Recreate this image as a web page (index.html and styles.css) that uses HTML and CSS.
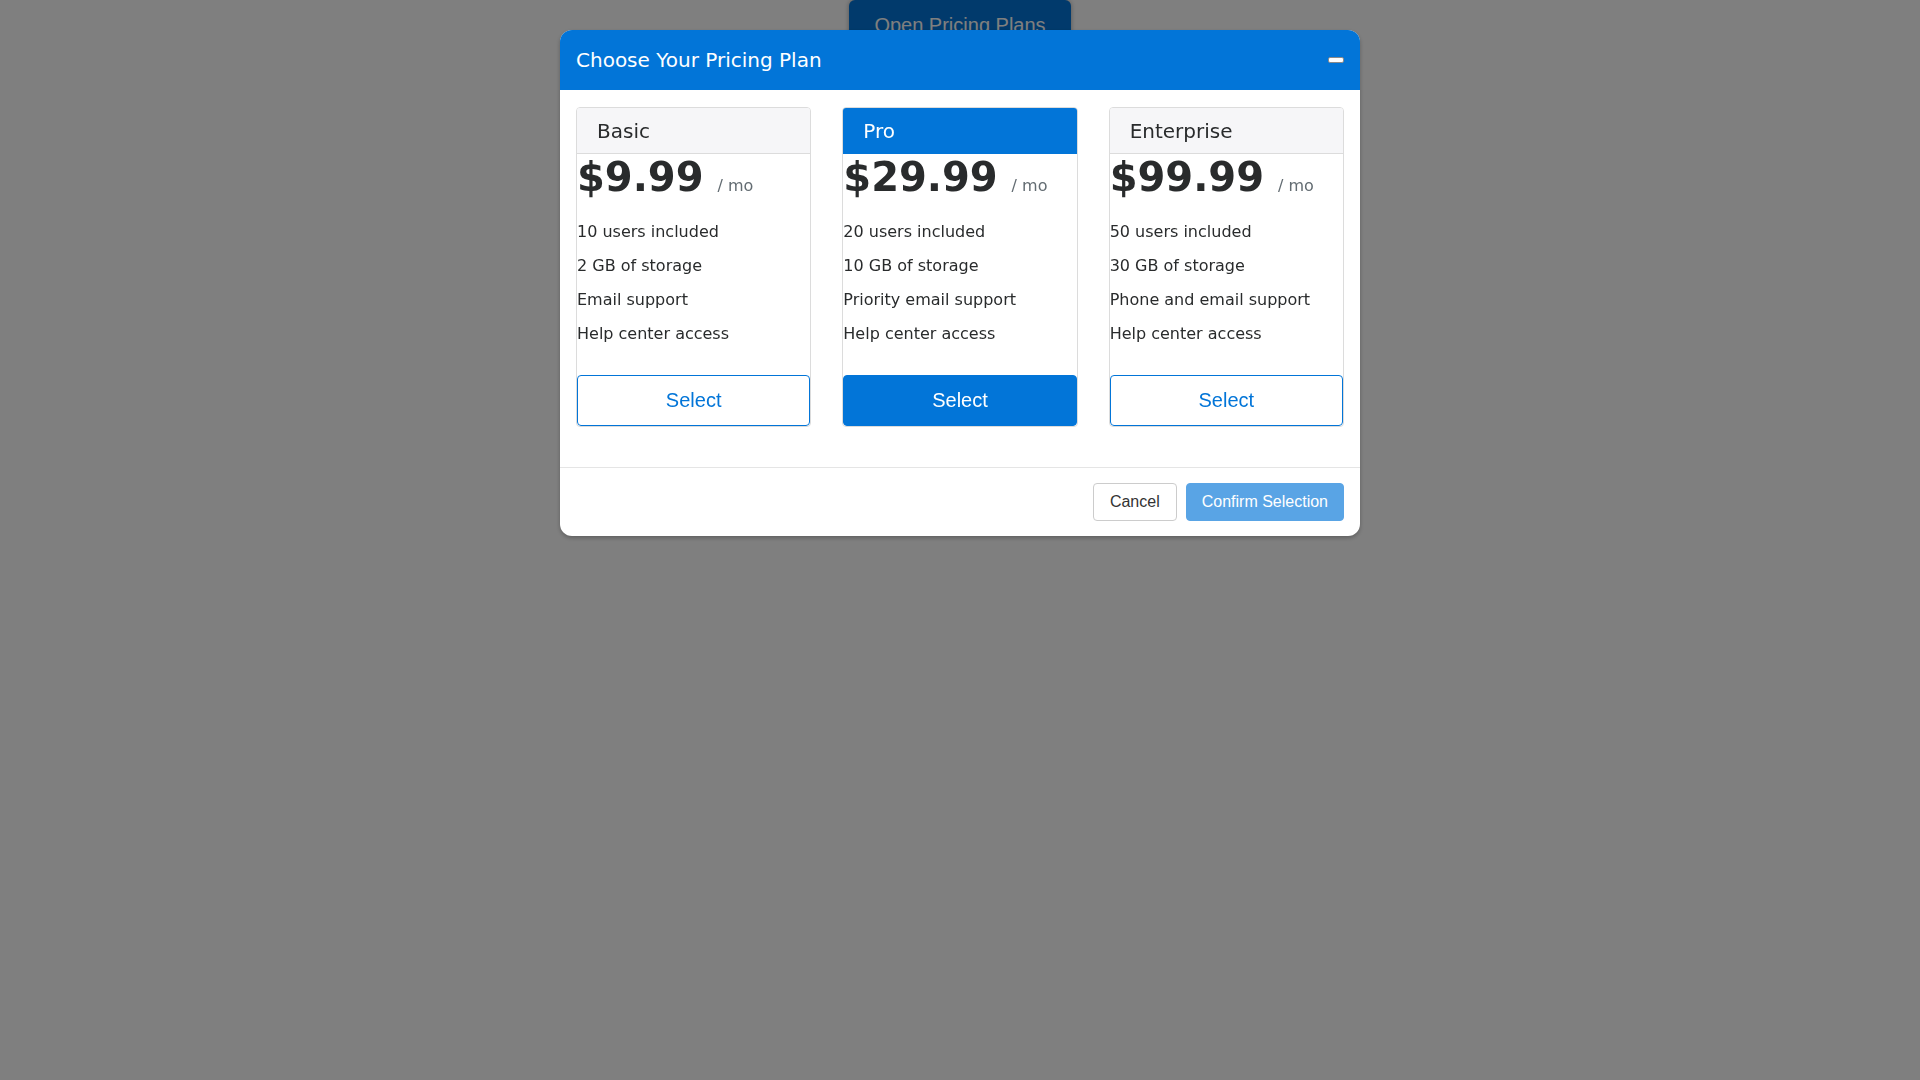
FILE: index.html
```html
<!DOCTYPE html>
<html lang="en">
<head>
    <meta charset="UTF-8">
    <meta name="viewport" content="width=device-width, initial-scale=1.0">
    <title>Pricing Plans</title>
    <link rel="stylesheet" href="styles.css">
</head>
<body>
    <div class="page">
        <button class="open-button">Open Pricing Plans</button>
    </div>

    <div class="overlay">
        <div class="modal">
            <div class="modal-header">
                <h2 class="modal-title">Choose Your Pricing Plan</h2>
                <button class="minimize" aria-label="Minimize"><span></span></button>
            </div>
            <div class="modal-body">
                <div class="plans">
                    <div class="plan">
                        <div class="plan-header">Basic</div>
                        <div class="price">$9.99 <span class="per">/ mo</span></div>
                        <ul class="features">
                            <li>10 users included</li>
                            <li>2 GB of storage</li>
                            <li>Email support</li>
                            <li>Help center access</li>
                        </ul>
                        <button class="select-button">Select</button>
                    </div>
                    <div class="plan featured">
                        <div class="plan-header">Pro</div>
                        <div class="price">$29.99 <span class="per">/ mo</span></div>
                        <ul class="features">
                            <li>20 users included</li>
                            <li>10 GB of storage</li>
                            <li>Priority email support</li>
                            <li>Help center access</li>
                        </ul>
                        <button class="select-button">Select</button>
                    </div>
                    <div class="plan">
                        <div class="plan-header">Enterprise</div>
                        <div class="price">$99.99 <span class="per">/ mo</span></div>
                        <ul class="features">
                            <li>50 users included</li>
                            <li>30 GB of storage</li>
                            <li>Phone and email support</li>
                            <li>Help center access</li>
                        </ul>
                        <button class="select-button">Select</button>
                    </div>
                </div>
            </div>
            <div class="modal-footer">
                <button class="btn btn-cancel">Cancel</button>
                <button class="btn btn-confirm" disabled>Confirm Selection</button>
            </div>
        </div>
    </div>
</body>
</html>
```

FILE: styles.css
```css
body {
    margin: 0;
    font-family: "DejaVu Sans", sans-serif;
    color: #292b2c;
    background: #fff;
}
.page {
    text-align: center;
}
.open-button {
    font-family: "Liberation Sans", Arial, sans-serif;
    font-size: 20px;
    color: #fff;
    background: #0275d8;
    border: 0;
    border-radius: 6px;
    padding: 14px 25px;
    box-shadow: 0 0 5px rgba(0, 0, 0, 0.35);
}
.overlay {
    position: fixed;
    inset: 0;
    background: rgba(0, 0, 0, 0.5);
}
.modal {
    width: 800px;
    margin: 30px auto 0;
    background: #fff;
    border-radius: 12px;
    overflow: hidden;
    box-shadow: 0 2px 4px rgba(0, 0, 0, 0.25);
}
.modal-header {
    display: flex;
    align-items: center;
    justify-content: space-between;
    background: #0275d8;
    color: #fff;
    padding: 15px 16px;
}
.modal-title {
    margin: 0;
    font-size: 20px;
    font-weight: normal;
    line-height: 1.5;
}
.minimize {
    background: none;
    border: 0;
    padding: 0;
    display: flex;
}
.minimize span {
    display: block;
    width: 14px;
    height: 4px;
    background: #fff;
    border: 1px solid #8a8a8a;
    border-radius: 2px;
}
.modal-body {
    padding: 17px 16px 40px;
}
.plans {
    display: grid;
    grid-template-columns: repeat(3, 1fr);
    gap: 31px;
}
.plan {
    border: 1px solid #dcdcdc;
    border-radius: 4px;
    overflow: hidden;
}
.plan-header {
    background: #f6f6f8;
    border-bottom: 1px solid #dcdcdc;
    font-size: 20px;
    line-height: 1.5;
    padding: 7.5px 20px;
}
.featured .plan-header {
    background: #0275d8;
    color: #fff;
    border-bottom-color: #0275d8;
}
.price {
    font-size: 40px;
    font-weight: bold;
    line-height: 46px;
    color: #292b2c;
}
.per {
    font-size: 16px;
    font-weight: normal;
    color: #636c72;
}
.features {
    list-style: none;
    margin: 6px 0 24px;
    padding: 0;
}
.features li {
    font-size: 16px;
    line-height: 24px;
    padding: 5px 0;
}
.select-button {
    display: block;
    width: 100%;
    font-family: "Liberation Sans", Arial, sans-serif;
    font-size: 20px;
    line-height: 23px;
    padding: 13px 0;
    background: #fff;
    color: #0275d8;
    border: 1px solid #0275d8;
    border-radius: 4px;
}
.featured .select-button {
    background: #0275d8;
    color: #fff;
}
.modal-footer {
    display: flex;
    justify-content: flex-end;
    gap: 9px;
    border-top: 1px solid #e5e5e5;
    padding: 15px 16px 15px;
}
.btn {
    font-family: "Liberation Sans", Arial, sans-serif;
    font-size: 16px;
    line-height: 24px;
    padding: 6px 15px;
    border-radius: 4px;
}
.btn-cancel {
    background: #fff;
    color: #333;
    border: 1px solid #ccc;
    padding: 6px 16px;
}
.btn-confirm {
    background: #0275d8;
    color: #fff;
    border: 1px solid #0275d8;
    opacity: 0.65;
}
```
